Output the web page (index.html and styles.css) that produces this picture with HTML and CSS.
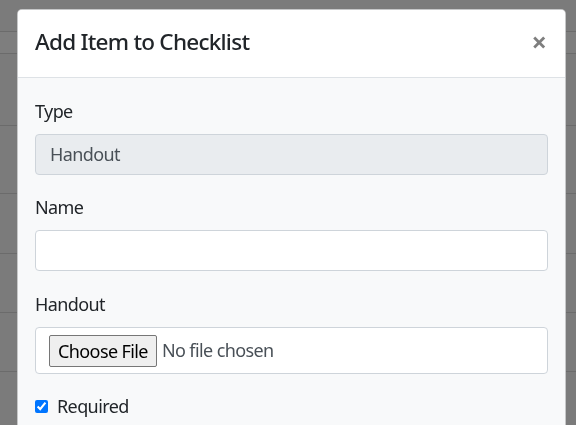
FILE: index.html
```html
<!DOCTYPE html>
<html lang="en">
<head>
<meta charset="utf-8">
<title>Add Item to Checklist</title>
<link rel="stylesheet" href="styles.css">
</head>
<body>
<div class="page">
  <div class="row r1"></div>
  <div class="row r2"></div>
  <div class="row r3"></div>
  <div class="row r4"></div>
  <div class="row r5"></div>
  <div class="row r6"></div>
  <div class="row r7"></div>
  <div class="row r8"></div>
</div>

<div class="modal">
  <div class="modal-header">
    <h5 class="modal-title">Add Item to Checklist</h5>
    <button class="close" type="button" aria-label="Close">×</button>
  </div>
  <div class="modal-body">
    <div class="form-group">
      <label class="label">Type</label>
      <div class="control control-disabled">Handout</div>
    </div>
    <div class="form-group form-group-wide">
      <label class="label">Name</label>
      <div class="control"></div>
    </div>
    <div class="form-group">
      <label class="label">Handout</label>
      <div class="control control-file">
        <span class="file-btn">Choose File</span>
        <span class="file-text">No file chosen</span>
      </div>
    </div>
    <div class="check-row">
      <input type="checkbox" class="check" checked>
      <span class="check-label">Required</span>
    </div>
  </div>
</div>
</body>
</html>
```

FILE: styles.css
```css
html, body {
  margin: 0;
  padding: 0;
  height: 100%;
  overflow: hidden;
}
body {
  background: #7b7b7b;
  font-family: "Noto Sans", "Open Sans", sans-serif;
  color: #212529;
  letter-spacing: -0.6px;
}
.page {
  display: flex;
  flex-direction: column;
}
.row {
  border-bottom: 1px solid #6b6b6b;
}
.r1 { height: 31px; }
.r2 { height: 21px; background: #7e7e7e; }
.r3 { height: 71px; }
.r4 { height: 67px; }
.r5 { height: 59px; }
.r6 { height: 58px; }
.r7 { height: 58px; }
.r8 { height: 60px; border-bottom: none; }

.modal {
  position: fixed;
  left: 17px;
  top: 9px;
  width: 549px;
  height: 460px;
  box-sizing: border-box;
  border: 1px solid rgba(0,0,0,0.2);
  border-radius: 5px;
  background: #f8f9fa;
  overflow: hidden;
  display: flex;
  flex-direction: column;
}
.modal-header {
  background: #fff;
  border-bottom: 1px solid #dee2e6;
  padding: 15px 17px 18px 17px;
  display: flex;
  justify-content: space-between;
  align-items: flex-start;
}
.modal-title {
  margin: 0;
  font-size: 22.5px;
  line-height: 34px;
  font-weight: 500;
  letter-spacing: -0.75px;
  color: #212529;
}
.close {
  border: none;
  background: transparent;
  padding: 0;
  margin: 0 1px 0 0;
  font-family: "Noto Sans", sans-serif;
  font-size: 27px;
  line-height: 34px;
  font-weight: 700;
  color: #000;
  opacity: 0.5;
  text-shadow: 0 1px 0 #fff;
}
.modal-body {
  padding: 20px 17px 0 17px;
  display: flex;
  flex-direction: column;
}
.form-group {
  display: flex;
  flex-direction: column;
  margin-bottom: 19px;
}
.form-group-wide {
  margin-bottom: 20px;
}
.label {
  font-size: 18px;
  line-height: 27px;
  margin-bottom: 9px;
  color: #212529;
}
.control {
  height: 41px;
  box-sizing: border-box;
  border: 1px solid #ced4da;
  border-radius: 4px;
  background: #fff;
  padding: 0 14px;
  font-size: 18px;
  line-height: 39px;
  color: #495057;
}
.control-disabled {
  background: #e9ecef;
}
.control-file {
  height: 47px;
  display: flex;
  align-items: center;
  padding: 0 13px;
  gap: 5px;
}
.file-btn {
  height: 32px;
  box-sizing: border-box;
  border: 1px solid #767676;
  border-radius: 2px;
  background: #efefef;
  padding: 0 8px;
  font-size: 18px;
  line-height: 30px;
  color: #000;
}
.file-text {
  font-size: 18px;
  color: #495057;
}
.check-row {
  display: flex;
  align-items: center;
  gap: 9px;
  height: 27px;
}
.check {
  margin: 0;
  width: 13px;
  height: 13px;
  accent-color: #0075ff;
}
.check-label {
  font-size: 18px;
  line-height: 27px;
  color: #212529;
}
```
